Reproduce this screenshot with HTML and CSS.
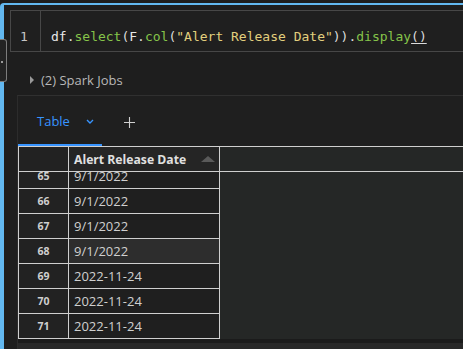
FILE: index.html
```html
<!DOCTYPE html>
<html lang="en">
<head>
    <meta charset="UTF-8">
    <meta name="viewport" content="width=device-width, initial-scale=1.0">
    <title>Notebook cell</title>
    <link rel="stylesheet" href="styles.css">
</head>
<body>
    <div class="cell">
        <div class="code">
            <div class="gutter">1</div>
            <div class="line"><span class="var">df</span>.<span class="fn">select</span>(<span class="var">F</span>.<span class="fn">col</span>(<span class="str">"Alert Release Date"</span>)).<span class="fn">display</span><span class="match">()</span></div>
        </div>

        <div class="jobs"><span class="caret"></span>(2) Spark Jobs</div>

        <div class="results">
            <div class="tabs">
                <div class="tab">
                    Table
                    <svg class="chev" width="8" height="5" viewBox="0 0 8 5"><polyline points="1,1 4,4 7,1" fill="none" stroke="#3794ff" stroke-width="1.4"/></svg>
                </div>
                <div class="add">
                    <svg width="11" height="11" viewBox="0 0 11 11"><path d="M5.5 0v11M0 5.5h11" stroke="#d0d0d0" stroke-width="1.1"/></svg>
                </div>
            </div>

            <div class="grid">
                <div class="head">
                    <div class="rn"></div>
                    <div class="val">Alert Release Date<span class="sort"></span></div>
                    <div class="rest"></div>
                </div>
                <div class="body">
                    <div class="rows">
                        <div class="row first"><div class="rn">65</div><div class="val">9/1/2022</div></div>
                        <div class="row"><div class="rn">66</div><div class="val">9/1/2022</div></div>
                        <div class="row"><div class="rn">67</div><div class="val">9/1/2022</div></div>
                        <div class="row hover"><div class="rn">68</div><div class="val">9/1/2022</div></div>
                        <div class="row"><div class="rn">69</div><div class="val">2022-11-24</div></div>
                        <div class="row"><div class="rn">70</div><div class="val">2022-11-24</div></div>
                        <div class="row"><div class="rn">71</div><div class="val">2022-11-24</div></div>
                    </div>
                    <div class="rest"></div>
                </div>
            </div>
            <div class="foot"></div>
        </div>
    </div>

    <div class="handle"><span class="handle-dot"></span></div>
</body>
</html>
```

FILE: styles.css
```css
body {
    margin: 0;
    height: 349px;
    overflow: hidden;
    background-color: #1e1e1e;
    font-family: "Open Sans", "Noto Sans", sans-serif;
    color: #cccccc;
}
.cell {
    margin-top: 3px;
    height: 344px;
    border-top: 2px solid #62b8f0;
    border-left: 4px solid #62b8f0;
    border-top-left-radius: 4px;
}
.code {
    display: flex;
    width: 470px;
    height: 40px;
    margin: 5px 0 0 6px;
    border: 1px solid #474747;
    background-color: #1f1f1f;
    font-family: "DejaVu Sans Mono", monospace;
    font-size: 13px;
    line-height: 20px;
}
.gutter {
    width: 20px;
    padding: 16px 0 0 9px;
    border-right: 1px solid #474747;
    color: #c6c6c6;
}
.line {
    padding: 16px 0 0 10px;
    color: #dcdcdc;
    white-space: pre;
}
.var { color: #e8e8e8; }
.fn { color: #86c44a; }
.str { color: #e2cf7e; }
.match {
    text-decoration: underline;
    text-underline-offset: 2px;
}
.jobs {
    display: flex;
    align-items: center;
    margin: 19px 0 0 26px;
    height: 18px;
    font-size: 13px;
    color: #b8b8b8;
}
.caret {
    width: 0;
    height: 0;
    margin-right: 7px;
    border-top: 4px solid transparent;
    border-bottom: 4px solid transparent;
    border-left: 4px solid #9a9a9a;
}
.results {
    margin: 6px 0 0 13px;
    border-top: 1px solid #303030;
    border-left: 1px solid #2c2c2c;
    background-color: #1f1f1f;
}
.tabs {
    display: flex;
    height: 50px;
}
.tab {
    display: flex;
    align-items: center;
    width: 65px;
    height: 48px;
    padding: 2px 0 0 19px;
    box-sizing: border-box;
    width: 84px;
    height: 50px;
    border-bottom: 2px solid #3794ff;
    color: #3794ff;
    font-size: 13px;
}
.chev {
    margin-left: 16px;
}
.add {
    display: flex;
    align-items: center;
    padding: 2px 0 0 22px;
}
.grid {
    border-top: 1px solid #cfcfcf;
}
.head {
    display: flex;
    height: 24px;
    border-bottom: 1px solid #cfcfcf;
}
.head .rn {
    width: 49px;
    border-left: 1px solid #cfcfcf;
    border-right: 1px solid #cfcfcf;
    background-color: #222222;
}
.head .val {
    display: flex;
    align-items: center;
    width: 145px;
    padding-left: 5px;
    border-right: 1px solid #cfcfcf;
    background-color: #252525;
    font-size: 12.2px;
    font-weight: 700;
    color: #e0e0e0;
}
.sort {
    margin-left: auto;
    margin-right: 4px;
    width: 0;
    height: 0;
    border-left: 7px solid transparent;
    border-right: 7px solid transparent;
    border-bottom: 6px solid #5a5a5a;
}
.rest {
    flex: 1;
    background-color: #252726;
}
.body {
    display: flex;
    height: 167px;
    overflow: hidden;
}
.rows {
    width: 202px;
}
.row {
    display: flex;
    height: 24px;
    border-bottom: 1px solid #cfcfcf;
}
.row.first {
    margin-top: -8px;
}
.row .rn {
    display: flex;
    align-items: center;
    justify-content: center;
    width: 49px;
    border-left: 1px solid #cfcfcf;
    border-right: 1px solid #cfcfcf;
    background-color: #222222;
    font-size: 10.5px;
    font-weight: 700;
    color: #cfcfcf;
}
.row .val {
    display: flex;
    align-items: center;
    width: 145px;
    padding-left: 5px;
    border-right: 1px solid #cfcfcf;
    background-color: #1f1f1f;
    font-size: 13px;
    color: #d0d0d0;
}
.row.hover .val {
    background-color: #2d2d2d;
}
.foot {
    height: 10px;
    border-top: 4px solid #1b1b1b;
    background-color: #282828;
}
.handle {
    position: absolute;
    left: 0;
    top: 39px;
    width: 6px;
    height: 41px;
    border: 1px solid #7c7c7c;
    border-left: none;
    border-radius: 0 3px 3px 0;
    background-color: #232323;
}
.handle-dot {
    position: absolute;
    left: 1px;
    top: 21px;
    width: 2px;
    height: 2px;
    background-color: #9a9a9a;
}
```
